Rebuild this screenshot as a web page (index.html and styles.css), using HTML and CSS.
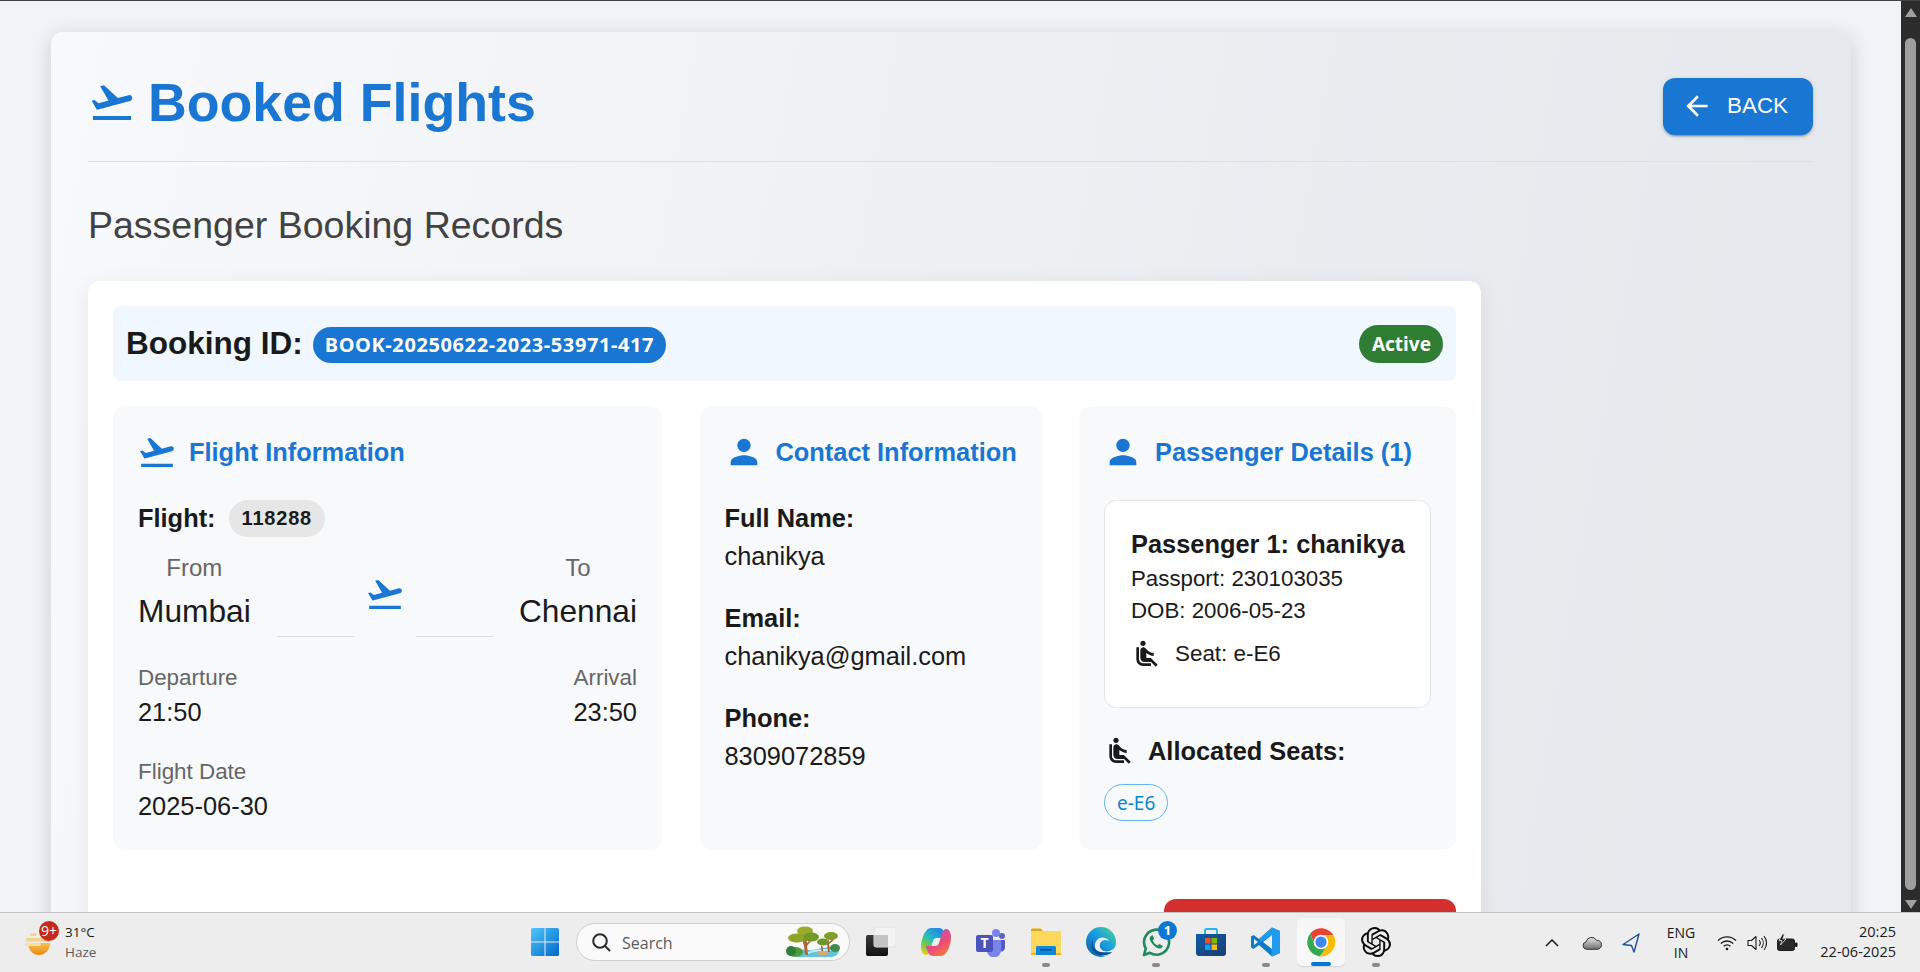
FILE: index.html

```html
<!DOCTYPE html>
<html lang="en">
<head>
  <meta charset="UTF-8" />
  <meta name="viewport" content="width=device-width, initial-scale=1.0"/>
  <title>Booked Flights</title>
  <link rel="stylesheet" href="styles.css">
</head>
<body>
  <svg class="sprites" width="0" height="0">
    <symbol id="takeoff" viewBox="0 0 24 24"><path d="M2.5 19h19v2h-19zm19.57-9.36c-.21-.8-1.04-1.28-1.84-1.06L14.92 10l-6.9-6.43-1.93.51 4.14 7.17-4.97 1.33-1.97-1.54-1.45.39 2.59 4.49s7.12-1.9 16.57-4.43c.81-.23 1.28-1.05 1.07-1.85z"/></symbol>
    <symbol id="person" viewBox="0 0 24 24"><path d="M12 12c2.21 0 4-1.79 4-4s-1.79-4-4-4-4 1.79-4 4 1.79 4 4 4zm0 2c-2.67 0-8 1.34-8 4v2h16v-2c0-2.66-5.33-4-8-4z"/></symbol>
    <symbol id="seat" viewBox="0 0 24 24"><path d="M7.59 5.41c-.78-.78-.78-2.05 0-2.83.78-.78 2.05-.78 2.83 0 .78.78.78 2.05 0 2.83-.79.79-2.05.79-2.83 0zM6 16V7H4v9c0 2.76 2.24 5 5 5h6v-2H9c-1.66 0-3-1.34-3-3zm14 4.07L14.93 15H11.5v-3.68c1.4 1.15 3.6 2.16 5.5 2.16v-2.16c-1.66.02-3.61-.87-4.67-2.04l-1.4-1.55c-.19-.21-.43-.38-.69-.5-.29-.14-.62-.23-.96-.23h-.03C8.01 7 7 8.01 7 9.25V15c0 1.66 1.34 3 3 3h5.07l3.5 3.5L20 20.07z"/></symbol>
  </svg>

  <div class="window">
    <main class="page">
      <section class="main-card">
        <header class="page-header">
          <h1 class="page-title">
            <svg class="icon-title"><use href="#takeoff"/></svg>
            Booked Flights
          </h1>
          <button class="back-btn">
            <svg class="icon-back" viewBox="0 0 24 24"><path d="M20 11H7.83l5.59-5.59L12 4l-8 8 8 8 1.41-1.41L7.83 13H20v-2z"/></svg>
            BACK
          </button>
        </header>

        <h2 class="records-title">Passenger Booking Records</h2>

        <article class="booking-card">
          <div class="booking-head">
            <span class="booking-label">Booking ID:</span>
            <span class="booking-id">BOOK-20250622-2023-53971-417</span>
            <span class="status">Active</span>
          </div>

          <div class="panels">
            <div class="panel">
              <h3 class="panel-title"><svg class="icon-40"><use href="#takeoff"/></svg>Flight Information</h3>
              <div class="flight-row">
                <strong>Flight:</strong>
                <span class="flight-no">118288</span>
              </div>
              <div class="route">
                <div class="city">
                  <span class="city-label">From</span>
                  <span class="city-name">Mumbai</span>
                </div>
                <div class="route-mid">
                  <span class="route-line"></span>
                  <svg class="icon-40"><use href="#takeoff"/></svg>
                  <span class="route-line"></span>
                </div>
                <div class="city">
                  <span class="city-label">To</span>
                  <span class="city-name">Chennai</span>
                </div>
              </div>
              <div class="times">
                <div>
                  <div class="muted">Departure</div>
                  <div class="value">21:50</div>
                </div>
                <div class="align-right">
                  <div class="muted">Arrival</div>
                  <div class="value">23:50</div>
                </div>
              </div>
              <div class="flight-date">
                <div class="muted">Flight Date</div>
                <div class="value">2025-06-30</div>
              </div>
            </div>

            <div class="panel">
              <h3 class="panel-title"><svg class="icon-40"><use href="#person"/></svg>Contact Information</h3>
              <div class="contact-row">
                <strong>Full Name:</strong>
                <div class="value">chanikya</div>
              </div>
              <div class="contact-row">
                <strong>Email:</strong>
                <div class="value">chanikya@gmail.com</div>
              </div>
              <div class="contact-row">
                <strong>Phone:</strong>
                <div class="value">8309072859</div>
              </div>
            </div>

            <div class="panel">
              <h3 class="panel-title"><svg class="icon-40"><use href="#person"/></svg>Passenger Details (1)</h3>
              <div class="passenger">
                <div class="passenger-name">Passenger 1: chanikya</div>
                <div class="passenger-line">Passport: 230103035</div>
                <div class="passenger-line">DOB: 2006-05-23</div>
                <div class="seat-row">
                  <svg class="icon-seat"><use href="#seat"/></svg>
                  Seat: e-E6
                </div>
              </div>
              <div class="allocated">
                <svg class="icon-seat"><use href="#seat"/></svg>
                <strong>Allocated Seats:</strong>
              </div>
              <span class="seat-chip">e-E6</span>
            </div>
          </div>

          <div class="card-actions">
            <button class="cancel-btn"></button>
          </div>
        </article>
      </section>
    </main>

    <div class="scrollbar">
      <span class="arrow-up"></span>
      <span class="thumb"></span>
      <span class="arrow-down"></span>
    </div>
  </div>

  <footer class="taskbar">
    <div class="weather">
      <div class="weather-icon">
        <svg width="26" height="26" viewBox="0 0 26 26">
          <defs><linearGradient id="sun" x1="0" y1="0" x2="0" y2="1"><stop offset="0" stop-color="#f7c04a"/><stop offset="1" stop-color="#ee8a12"/></linearGradient></defs>
          <path d="M3 12h22a11 12 0 0 1-22 0z" fill="url(#sun)" transform="translate(0 1)"/>
          <rect x="5" y="3" width="7" height="3" rx="1.5" fill="#f8d98c"/>
          <rect x="1" y="8" width="20" height="3.4" rx="1.7" fill="#f4d28a"/>
          <rect x="0" y="13" width="16" height="3" rx="1.5" fill="#f6dfa8"/>
          <rect x="19" y="8.5" width="6" height="3" rx="1.5" fill="#f1b53f"/>
        </svg>
        <span class="weather-badge">9+</span>
      </div>
      <div class="weather-text">
        <div>31°C</div>
        <div class="haze">Haze</div>
      </div>
    </div>

    <div class="task-center">
      <div class="slot">
        <svg class="tb-icon" viewBox="0 0 30 30">
          <defs><linearGradient id="win" x1="0" y1="0" x2="1" y2="1"><stop offset="0" stop-color="#4fc8fb"/><stop offset="1" stop-color="#0067c8"/></linearGradient></defs>
          <path fill="url(#win)" d="M1 2.5a1.5 1.5 0 0 1 1.5-1.5H14.5V14.5H1zM15.5 1H27.5A1.5 1.5 0 0 1 29 2.5V14.5H15.5zM1 15.5H14.5V29H2.5A1.5 1.5 0 0 1 1 27.5zM15.5 15.5H29V27.5A1.5 1.5 0 0 1 27.5 29H15.5z"/>
        </svg>
      </div>

      <div class="search">
        <svg class="search-icon" viewBox="0 0 20 20" fill="none" stroke="#2b2b2b" stroke-width="2"><circle cx="9" cy="9" r="6.8"/><path d="M14 14l4.5 4.5" stroke-linecap="round"/></svg>
        <span class="search-text">Search</span>
        <svg class="search-art" viewBox="0 0 56 32">
          <path d="M8 27c8-6 14-2 20-3s14-4 26-2c1 5-3 9-8 9H14c-4 0-6-2-6-4z" fill="#5fc4dc"/>
          <path d="M20 29c6-5 16-5 28-5" stroke="#c8eef4" stroke-width="2" fill="none"/>
          <path d="M17 13l2 7 1 9h3l-1-9 5-6-1-1-4 4-1-6-1 2-3-2z" fill="#b5633a"/>
          <ellipse cx="10" cy="26" rx="8" ry="5" fill="#4f9a3a"/>
          <circle cx="6" cy="25" r="5" fill="#2f7d3a"/>
          <ellipse cx="20" cy="5" rx="8" ry="4.5" fill="#9cab2a"/>
          <ellipse cx="12" cy="12" rx="9" ry="4.5" fill="#8ea528"/>
          <ellipse cx="26" cy="11" rx="8" ry="4.5" fill="#6f9a2a"/>
          <path d="M42 17l1 9h2l-1-8 5-4-1-1-4 3-1-3z" fill="#a85c34"/>
          <path d="M36 20l1 8h1.5l-1-8z" fill="#a85c34"/>
          <ellipse cx="46" cy="10" rx="7" ry="4" fill="#7f9f28"/>
          <ellipse cx="38" cy="16" rx="6" ry="3.5" fill="#6c962a"/>
          <ellipse cx="50" cy="22" rx="5" ry="4" fill="#3f8a4a"/>
          <ellipse cx="38" cy="27" rx="6" ry="2" fill="#d9a878"/>
        </svg>
      </div>

      <div class="slot">
        <svg class="tb-icon" viewBox="0 0 30 30">
          <defs><linearGradient id="tv" x1="0" y1="0" x2="0" y2="1"><stop offset="0" stop-color="#3a3a3a"/><stop offset="1" stop-color="#111"/></linearGradient></defs>
          <rect x="0" y="8" width="22" height="21" rx="2" fill="url(#tv)"/>
          <rect x="8" y="0" width="22" height="20" rx="2" fill="#f3f3f3" stroke="#e2e2e2"/>
          <rect x="8" y="8" width="14" height="12" rx="1" fill="#c4c4c4"/>
        </svg>
      </div>

      <div class="slot">
        <svg class="tb-icon" viewBox="0 0 30 30">
          <defs>
            <linearGradient id="cp1" x1=".75" y1="0" x2=".1" y2="1"><stop offset="0" stop-color="#2a7fe6"/><stop offset=".4" stop-color="#22b8c8"/><stop offset=".7" stop-color="#6fcb45"/><stop offset="1" stop-color="#f2d02c"/></linearGradient>
            <linearGradient id="cp2" x1=".25" y1="0" x2=".9" y2="1"><stop offset="0" stop-color="#f0803a"/><stop offset=".4" stop-color="#ec4a78"/><stop offset="1" stop-color="#a45ae8"/></linearGradient>
          </defs>
          <path d="M10 1h8c2.500 0 4 1.500 5 4l2.500 6h-9.500c-2 0-3.500 1-4 3l-3 10c-.5 2-2 4-4.500 4C2 28 0 24 0 20c0-7 3-14 5-16 1.500-2 3-3 5-3z" fill="url(#cp1)"/>
          <path d="M10 1h8c2.500 0 4 1.500 5 4l2.500 6h-9.500c-2 0-3.500 1-4 3l-3 10c-.5 2-2 4-4.500 4C2 28 0 24 0 20c0-7 3-14 5-16 1.500-2 3-3 5-3z" fill="url(#cp2)" transform="rotate(180 15 15)"/>
        </svg>
      </div>

      <div class="slot">
        <svg class="tb-icon" viewBox="0 0 30 30">
          <circle cx="20" cy="6" r="4" fill="#7b83eb"/>
          <circle cx="26" cy="9" r="3" fill="#5a62c4"/>
          <path d="M23 13h6v8a4 4 0 0 1-6 3z" fill="#5059c9"/>
          <path d="M10 13h15v10a7 7 0 0 1-14 1z" fill="#7b83eb"/>
          <rect x="0" y="8" width="17" height="17" rx="2" fill="#4b53bc"/>
          <text class="teams-t" x="8.5" y="21">T</text>
        </svg>
      </div>

      <div class="slot dot">
        <svg class="tb-icon" viewBox="0 0 30 30">
          <path d="M0 3a1.5 1.5 0 0 1 1.5-1.5h8l3 3h-12.500z" fill="#e3a30e"/>
          <path d="M0 4h29a1 1 0 0 1 1 1v23H0z" fill="#fdd85c"/>
          <rect x="0" y="26" width="30" height="2" fill="#f0b41a"/>
          <path d="M5 20.500a1.500 1.500 0 0 1 1.500-1.500h17a1.500 1.500 0 0 1 1.500 1.500V28H5z" fill="#0f86d8"/>
          <rect x="9" y="22" width="12" height="1.500" fill="#0a4f8f"/>
        </svg>
      </div>

      <div class="slot">
        <svg class="tb-icon" viewBox="0 0 30 30">
          <defs>
            <linearGradient id="edge" x1="0" y1="1" x2="1" y2="0"><stop offset="0" stop-color="#0c59a4"/><stop offset=".55" stop-color="#1b9de2"/><stop offset=".8" stop-color="#35c1b1"/><stop offset="1" stop-color="#6fe06a"/></linearGradient>
          </defs>
          <circle cx="15" cy="15" r="15" fill="url(#edge)"/>
          <path d="M30 19c-3 5-10 7-14 4-3-2-3-7 0-9 2-1.500 5-1.500 7 0-2-4-9-5-12-1-3 3-3 11 2 14 3 3 11 4 17-7z" fill="#ededed"/>
          <path d="M26 25c-4 4-12 5-17 1-4-3-5-9-2-13-1 6 2 11 8 12 4 .6 8 0 11 0z" fill="#0b4f95"/>
        </svg>
      </div>

      <div class="slot dot">
        <svg class="tb-icon" viewBox="0 0 30 30" fill="none" stroke="#1f8a5b" stroke-width="2.600">
          <path d="M3 28l1.800-6.500A12.500 12.500 0 1 1 9 25.800z" stroke-linejoin="round"/>
          <path d="M10 9c-1.500 1-2 3 0 6s5 6 8 6.500c2 .3 3.500-1 3.800-2.500l-3.500-2-1.800 1.500c-2-1-4-3-4.800-5l1.500-1.800L11.500 8z" fill="#1f8a5b" stroke="none"/>
        </svg>
        <span class="wa-badge">1</span>
      </div>

      <div class="slot">
        <svg class="tb-icon" viewBox="0 0 30 30">
          <defs><linearGradient id="store" x1="0" y1="0" x2="1" y2="1"><stop offset="0" stop-color="#0f5ea8"/><stop offset="1" stop-color="#1d3b6e"/></linearGradient></defs>
          <path d="M9 8V3.500A1.500 1.500 0 0 1 10.500 2h9A1.500 1.500 0 0 1 21 3.500V8" fill="none" stroke="#2bb5ee" stroke-width="2"/>
          <path d="M0 7h30v19a3 3 0 0 1-3 3H3a3 3 0 0 1-3-3z" fill="url(#store)"/>
          <rect x="9" y="11" width="5.500" height="5.500" fill="#f25022"/>
          <rect x="15.500" y="11" width="5.500" height="5.500" fill="#7fba00"/>
          <rect x="9" y="17.500" width="5.500" height="5.500" fill="#00a4ef"/>
          <rect x="15.500" y="17.500" width="5.500" height="5.500" fill="#ffb900"/>
        </svg>
      </div>

      <div class="slot dot">
        <svg class="tb-icon" viewBox="0 0 30 30">
          <path d="M21 0.500L29 4v22l-8 3.500L8 18 2.500 22 0 20.500V9.500L2.500 8 8 12z" fill="#0b7bc4"/>
          <path d="M21 0.500L29 4v22l-8 3.500-0.500-.5V8L10 15l-2-3z" fill="#1f9cf0"/>
          <path d="M21 8v14l-9-7z" fill="#ededed"/>
          <path d="M3 12l4 3-4 3z" fill="#ededed"/>
        </svg>
      </div>

      <div class="slot active">
        <div class="active-box">
          <svg class="tb-icon" viewBox="0 0 24 24">
            <path d="M3.500 5A11.500 11.500 0 0 1 22 6.500H12L7 15z" fill="#ea4335"/>
            <path d="M22 6.500A11.500 11.500 0 0 1 11 23.500L17 15 12 6.500z" fill="#fbbc04"/>
            <path d="M11 23.500A11.500 11.500 0 0 1 3.500 5L7 15h10z" fill="#34a853"/>
            <circle cx="12" cy="12" r="5.800" fill="#fff"/>
            <circle cx="12" cy="12" r="4.500" fill="#4285f4"/>
          </svg>
          <span class="active-bar"></span>
        </div>
      </div>

      <div class="slot dot">
        <svg class="tb-icon" viewBox="0 0 24 24"><path fill="#0d0d0d" d="M22.2819 9.8211a5.9847 5.9847 0 0 0-.5157-4.9108 6.0462 6.0462 0 0 0-6.5098-2.9A6.0651 6.0651 0 0 0 4.9807 4.1818a5.9847 5.9847 0 0 0-3.9977 2.9 6.0462 6.0462 0 0 0 .7427 7.0966 5.98 5.98 0 0 0 .511 4.9107 6.051 6.051 0 0 0 6.5146 2.9001A5.9847 5.9847 0 0 0 13.2599 24a6.0557 6.0557 0 0 0 5.7718-4.2058 5.9894 5.9894 0 0 0 3.9977-2.9001 6.0557 6.0557 0 0 0-.7475-7.0729zm-9.022 12.6081a4.4755 4.4755 0 0 1-2.8764-1.0408l.1419-.0804 4.7783-2.7582a.7948.7948 0 0 0 .3927-.6813v-6.7369l2.02 1.1686a.071.071 0 0 1 .038.052v5.5826a4.504 4.504 0 0 1-4.4945 4.4944zm-9.6607-4.1254a4.4708 4.4708 0 0 1-.5346-3.0137l.142.0852 4.783 2.7582a.7712.7712 0 0 0 .7806 0l5.8428-3.3685v2.3324a.0804.0804 0 0 1-.0332.0615L9.74 19.9502a4.4992 4.4992 0 0 1-6.1408-1.6464zM2.3408 7.8956a4.485 4.485 0 0 1 2.3655-1.9728V11.6a.7664.7664 0 0 0 .3879.6765l5.8144 3.3543-2.0201 1.1685a.0757.0757 0 0 1-.071 0l-4.8303-2.7865A4.504 4.504 0 0 1 2.3408 7.872zm16.5963 3.8558L13.1038 8.364 15.1192 7.2a.0757.0757 0 0 1 .071 0l4.8303 2.7913a4.4944 4.4944 0 0 1-.6765 8.1042v-5.6772a.79.79 0 0 0-.407-.667zm2.0107-3.0231l-.142-.0852-4.7735-2.7818a.7759.7759 0 0 0-.7854 0L9.409 9.2297V6.8974a.0662.0662 0 0 1 .0284-.0615l4.8303-2.7866a4.4992 4.4992 0 0 1 6.6802 4.66zM8.3065 12.863l-2.02-1.1638a.0804.0804 0 0 1-.038-.0567V6.0742a4.4992 4.4992 0 0 1 7.3757-3.4537l-.142.0805L8.704 5.459a.7948.7948 0 0 0-.3927.6813zm1.0976-2.3654l2.602-1.4998 2.6069 1.4998v2.9994l-2.5974 1.4997-2.6067-1.4997Z"/></svg>
      </div>
    </div>

    <div class="tray">
      <svg class="tray-caret" viewBox="0 0 14 8" fill="none" stroke="#1a1a1a" stroke-width="1.500"><path d="M1 7l6-6 6 6"/></svg>
      <svg class="tray-cloud" viewBox="0 0 20 14">
        <defs><linearGradient id="cloud" x1="0" y1="0" x2="0" y2="1"><stop offset="0" stop-color="#e6e6e6"/><stop offset="1" stop-color="#6f6f6f"/></linearGradient></defs>
        <path d="M4.500 13.300a3.800 3.800 0 0 1-.4-7.500 5.600 5.600 0 0 1 10.400-1.500 4.500 4.500 0 0 1 1 9z" fill="url(#cloud)" stroke="#333" stroke-width="1"/>
      </svg>
      <svg class="tray-loc" viewBox="0 0 18 20" fill="none" stroke="#1d4f9c" stroke-width="1.400"><path d="M17 1L1 11.500l8.500 1L12 19z" stroke-linejoin="round"/></svg>
      <div class="lang">
        <div>ENG</div>
        <div>IN</div>
      </div>
      <svg class="tray-wifi" viewBox="0 0 20 16" fill="none" stroke="#1a1a1a" stroke-width="1.300"><path d="M1 5.500a13 13 0 0 1 18 0M3.800 8.500a9 9 0 0 1 12.400 0M6.600 11.300a5 5 0 0 1 6.800 0"/><circle cx="10" cy="14" r="1.300" fill="#1a1a1a" stroke="none"/></svg>
      <svg class="tray-vol" viewBox="0 0 20 16" fill="none" stroke="#1a1a1a" stroke-width="1.100"><path d="M1 5.500h3.500L9 1.500v13l-4.500-4H1z" stroke-linejoin="round"/><path d="M12 5a4.500 4.500 0 0 1 0 6M14.500 3a8 8 0 0 1 0 10M17 1a11 11 0 0 1 0 14"/></svg>
      <svg class="tray-bat" viewBox="0 0 22 18"><rect x="1.500" y="5" width="17" height="11.500" rx="2" fill="#2a2a2a" stroke="#1a1a1a"/><rect x="19" y="8.500" width="2.500" height="4.500" rx="1" fill="#1a1a1a"/><path d="M6.500 0L3 6.500h3L4.500 11 10 5H6.800l1.700-5z" fill="#1a1a1a" stroke="#ededed" stroke-width=".8"/></svg>
      <div class="clock">
        <div>20:25</div>
        <div>22-06-2025</div>
      </div>
    </div>
  </footer>
</body>
</html>
```

FILE: styles.css

```css
* {
  box-sizing: border-box;
}
html, body {
  height: 100%;
}
body {
  margin: 0;
  font-family: "Liberation Sans", Arial, sans-serif;
  color: #1a1a1a;
  display: flex;
  flex-direction: column;
  overflow: hidden;
  border-top: 1px solid #3f4347;
}
.sprites {
  display: block;
  height: 0;
}
svg {
  display: block;
  flex-shrink: 0;
}
h1, h2, h3 {
  margin: 0;
}
strong {
  font-weight: 700;
}

/* window + scrollbar */
.window {
  flex: 1;
  min-height: 0;
  display: flex;
  overflow: hidden;
}
.page {
  flex: 1;
  min-width: 0;
  height: 1100px;
  padding: 31px 50px 0 51px;
  background: #f0f4f9;
}
.scrollbar {
  width: 19px;
  background: #2c2c2c;
  display: flex;
  flex-direction: column;
  align-items: center;
  padding-top: 7px;
}
.arrow-up {
  border: 6px solid transparent;
  border-top: 0;
  border-bottom: 9px solid #a0a0a0;
}
.thumb {
  width: 11px;
  height: 852px;
  margin-top: 21px;
  border-radius: 6px;
  background: #9f9f9f;
}
.arrow-down {
  margin-top: 10px;
  border: 6px solid transparent;
  border-bottom: 0;
  border-top: 9px solid #a0a0a0;
}

/* main card */
.main-card {
  width: 1800px;
  min-height: 1060px;
  padding: 38px 38px 38px 37px;
  border-radius: 12px;
  background: linear-gradient(100deg, #f8f9fd 0%, #eef0f4 45%, #e5e8ec 90%);
  box-shadow: 0 4px 20px rgba(0, 0, 0, 0.16);
}
.page-header {
  display: flex;
  justify-content: space-between;
  align-items: flex-start;
  padding-bottom: 26px;
  border-bottom: 1px solid #e0e0e0;
}
.page-title {
  display: flex;
  align-items: center;
  font-size: 53.700px;
  line-height: 64px;
  font-weight: 700;
  color: #1976d2;
}
.icon-title {
  width: 48px;
  height: 48px;
  margin-right: 12px;
  fill: #1976d2;
}
.back-btn {
  display: flex;
  align-items: center;
  height: 57px;
  margin-top: 8px;
  padding: 0 25px 2px 18px;
  border: none;
  border-radius: 12px;
  background: #1976d2;
  color: #fff;
  font-family: inherit;
  font-size: 22.400px;
  box-shadow: 0 3px 1px -2px rgba(0,0,0,.2), 0 2px 2px 0 rgba(0,0,0,.14), 0 1px 5px 0 rgba(0,0,0,.12);
}
.icon-back {
  width: 32px;
  height: 32px;
  margin-right: 14px;
  fill: #fff;
}
.records-title {
  margin: 43px 0 36px;
  font-size: 37.500px;
  line-height: 40px;
  font-weight: 400;
  color: #424242;
}

/* booking card */
.booking-card {
  width: 1393px;
  padding: 25px;
  border-radius: 12px;
  background: #fff;
  box-shadow: 0 4px 20px rgba(0, 0, 0, 0.08);
}
.booking-head {
  display: flex;
  align-items: center;
  height: 75px;
  padding: 0 13px;
  border-radius: 8px;
  background: #f0f7ff;
}
.booking-label {
  font-size: 31.500px;
  font-weight: 700;
}
.booking-id {
  margin: 3px 0 0 10px;
  padding: 0 12px;
  height: 36px;
  line-height: 36px;
  border-radius: 18px;
  background: #1976d2;
  color: #fff;
  font-family: "Noto Sans", sans-serif;
  font-size: 20px;
  font-weight: 700;
  letter-spacing: 0.600px;
}
.status {
  margin-left: auto;
  padding: 0 12px 0 13px;
  height: 38px;
  line-height: 38px;
  border-radius: 19px;
  background: #2e7d32;
  color: #fff;
  font-family: "Noto Sans", sans-serif;
  font-size: 19px;
  font-weight: 700;
}
.panels {
  display: grid;
  grid-template-columns: 549px 342px 377px;
  column-gap: 37.500px;
  margin-top: 25px;
}
.panel {
  height: 444px;
  padding: 25px;
  border-radius: 12px;
  background: #f8f9fb;
}
.panel-title {
  display: flex;
  align-items: center;
  height: 42px;
  margin-bottom: 27px;
  font-size: 25.400px;
  font-weight: 700;
  color: #1976d2;
  white-space: nowrap;
}
.icon-40 {
  width: 40px;
  height: 40px;
  fill: #1976d2;
}
.panel-title .icon-40 {
  margin: 0 12px 0 -1px;
}

/* flight panel */
.flight-row {
  display: flex;
  align-items: center;
  height: 37px;
  font-size: 25.400px;
}
.flight-no {
  height: 37px;
  line-height: 37px;
  margin-left: 13px;
  padding: 0 13px;
  border-radius: 19px;
  background: #e6e6e6;
  font-size: 20px;
  font-weight: 700;
  letter-spacing: 0.800px;
}
.route {
  display: flex;
  height: 87px;
  margin-top: 13px;
}
.city {
  display: flex;
  flex-direction: column;
  align-items: center;
}
.city-label {
  font-size: 24px;
  line-height: 36px;
  color: #666;
}
.city-name {
  margin-top: 4px;
  font-size: 31.700px;
  line-height: 42px;
}
.route-mid {
  flex: 1;
  display: flex;
  align-items: center;
  gap: 11px;
  padding: 0 26px;
}
.route-line {
  flex: 1;
  align-self: flex-end;
  height: 1px;
  background: #dcdfe3;
}
.times {
  display: flex;
  justify-content: space-between;
  margin-top: 24px;
}
.align-right {
  text-align: right;
}
.muted {
  font-size: 22.400px;
  line-height: 33px;
  color: #666;
}
.value {
  font-size: 25.400px;
  line-height: 37.500px;
}
.flight-date {
  margin-top: 23px;
}

/* contact panel */
.contact-row {
  margin-bottom: 25px;
  font-size: 25.400px;
  line-height: 37.500px;
}

/* passenger panel */
.passenger {
  height: 208px;
  padding: 25px 0 0 26px;
  border: 1px solid #e4e6e8;
  border-radius: 12px;
  background: #fff;
  white-space: nowrap;
}
.passenger-name {
  font-size: 25.400px;
  font-weight: 700;
  line-height: 37px;
}
.passenger-line {
  font-size: 22.300px;
  line-height: 32px;
}
.seat-row {
  display: flex;
  align-items: center;
  margin-top: 11px;
  font-size: 22.400px;
}
.icon-seat {
  width: 32px;
  height: 32px;
  margin-right: 12px;
  fill: #1a1a1a;
}
.allocated {
  display: flex;
  align-items: center;
  margin-top: 27px;
  font-size: 25.400px;
}
.seat-chip {
  display: inline-block;
  height: 37px;
  line-height: 36px;
  margin-top: 17px;
  padding: 0 12px;
  border: 1px solid #64b5f6;
  border-radius: 19px;
  color: #0288d1;
  font-family: "Noto Sans", sans-serif;
  font-size: 19px;
}
.card-actions {
  display: flex;
  justify-content: flex-end;
  margin-top: 49px;
}
.cancel-btn {
  width: 292px;
  height: 57px;
  border: none;
  border-radius: 12px;
  background: #d32f2f;
}

/* windows taskbar */
.taskbar {
  flex: none;
  display: flex;
  height: 60px;
  background: #ededed;
  border-top: 1px solid #c2c2c2;
  font-family: "Open Sans", sans-serif;
  font-size: 14px;
  color: #1a1a1a;
}
.weather {
  display: flex;
  width: 517px;
  padding: 8px 0 0 25px;
}
.weather-icon {
  position: relative;
  width: 40px;
  padding-top: 9px;
}
.weather-badge {
  position: absolute;
  left: 14px;
  top: 0;
  width: 20px;
  height: 20px;
  line-height: 20px;
  border-radius: 50%;
  background: #c42b1c;
  color: #fff;
  font-size: 14px;
  text-align: center;
}
.weather-text {
  line-height: 20px;
  padding-top: 1px;
  font-size: 13.500px;
}
.haze {
  color: #5c5c5c;
}
.task-center {
  display: flex;
}
.slot {
  position: relative;
  width: 55px;
  height: 59px;
  padding-top: 14px;
  display: flex;
  flex-direction: column;
  align-items: center;
}
.tb-icon {
  width: 30px;
  height: 30px;
}
.dot::after {
  content: "";
  width: 8px;
  height: 4px;
  margin-top: 6px;
  border-radius: 2px;
  background: #8a8a8a;
}
.wa-badge {
  position: absolute;
  left: 30px;
  top: 8px;
  width: 19px;
  height: 19px;
  line-height: 19px;
  border-radius: 50%;
  background: #0c78d4;
  color: #fff;
  font-size: 13px;
  font-weight: 700;
  text-align: center;
}
.teams-t {
  fill: #fff;
  font-family: "Open Sans", sans-serif;
  font-size: 14px;
  font-weight: 700;
  text-anchor: middle;
}
.search {
  display: flex;
  align-items: center;
  width: 274px;
  height: 38px;
  margin: 10px 3px 0 4px;
  padding: 0 8px 0 14px;
  border: 1px solid #d0d0d0;
  border-radius: 19px;
  background: #fafafa;
}
.search-icon {
  width: 20px;
  height: 20px;
}
.search-text {
  margin: 2px 0 0 11px;
  font-size: 16px;
  color: #5a5a5a;
}
.search-art {
  width: 56px;
  height: 32px;
  margin-left: auto;
}
.active-box {
  display: flex;
  flex-direction: column;
  align-items: center;
  width: 48px;
  height: 48px;
  margin-top: -9px;
  padding-top: 9px;
  border-radius: 5px;
  background: #f7f7f7;
  box-shadow: 0 1px 1px rgba(0, 0, 0, 0.1);
}
.active-bar {
  width: 20px;
  height: 4px;
  margin-top: 5px;
  border-radius: 2px;
  background: #0078d4;
}
.tray {
  flex: 1;
  display: flex;
  align-items: center;
  padding-left: 142px;
}
.tray-caret {
  width: 14px;
  height: 8px;
}
.tray-cloud {
  width: 20px;
  height: 14px;
  margin-left: 23px;
}
.tray-loc {
  width: 18px;
  height: 20px;
  margin-left: 20px;
}
.lang {
  width: 40px;
  margin-left: 21px;
  text-align: center;
  line-height: 20px;
}
.tray-wifi {
  width: 20px;
  height: 16px;
  margin-left: 16px;
}
.tray-vol {
  width: 20px;
  height: 16px;
  margin-left: 10px;
}
.tray-bat {
  width: 22px;
  height: 18px;
  margin-left: 9px;
}
.clock {
  width: 98px;
  padding-bottom: 2px;
  text-align: right;
  font-size: 14.500px;
  line-height: 20px;
}
```
